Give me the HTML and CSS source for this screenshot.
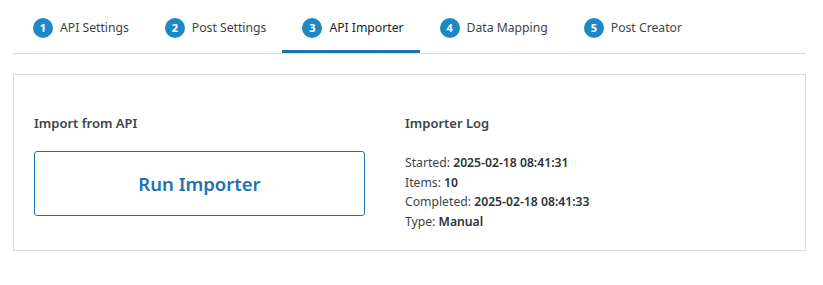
FILE: index.html
```html
<!DOCTYPE html>
<html>
<head>
<meta charset="utf-8">
<link rel="stylesheet" href="styles.css">
</head>
<body>
<div class="wrap">
  <nav class="tabs">
    <a class="tab"><span class="num">1</span><span class="label">API Settings</span></a>
    <a class="tab"><span class="num">2</span><span class="label">Post Settings</span></a>
    <a class="tab active"><span class="num">3</span><span class="label">API Importer</span></a>
    <a class="tab"><span class="num">4</span><span class="label">Data Mapping</span></a>
    <a class="tab"><span class="num">5</span><span class="label">Post Creator</span></a>
  </nav>
  <section class="card">
    <div class="col">
      <h3 class="heading">Import from API</h3>
      <button class="run">Run Importer</button>
    </div>
    <div class="col">
      <h3 class="heading">Importer Log</h3>
      <div class="log">
        <div>Started: <b>2025-02-18 08:41:31</b></div>
        <div>Items: <b>10</b></div>
        <div>Completed: <b>2025-02-18 08:41:33</b></div>
        <div>Type: <b>Manual</b></div>
      </div>
    </div>
  </section>
</div>
</body>
</html>
```
FILE: styles.css
```css
html, body {
  margin: 0;
  padding: 0;
  background: #ffffff;
}
body {
  font-family: "Noto Sans", "Open Sans", sans-serif;
  font-size: 12.2px;
  color: #3c434a;
}
.wrap {
  margin: 0 17px 0 13px;
}
.tabs {
  display: flex;
  border-bottom: 1px solid #dcdcde;
  height: 54px;
  box-sizing: border-box;
}
.tab {
  display: flex;
  align-items: center;
  gap: 7px;
  padding: 5px 16px 0 20px;
  height: 53px;
  box-sizing: border-box;
  border-bottom: 3px solid transparent;
  color: #3c434a;
}
.tab.active {
  border-bottom-color: #2271b1;
  color: #1d2327;
}
.num {
  width: 20px;
  height: 20px;
  border-radius: 50%;
  background: #1e88c7;
  color: #ffffff;
  font-size: 11px;
  font-weight: 700;
  display: flex;
  align-items: center;
  justify-content: center;
}
.label {
  font-size: 12.2px;
}
.card {
  margin-top: 20px;
  border: 1px solid #dcdcde;
  padding: 38px 20px 21px 20px;
  display: grid;
  grid-template-columns: 331px 1fr;
  column-gap: 40px;
  height: 177px;
  box-sizing: border-box;
}
.heading {
  margin: 0 0 18px 0;
  font-size: 13px;
  font-weight: 600;
  color: #3c434a;
  line-height: 20px;
}
.run {
  width: 331px;
  height: 65px;
  border: 1px solid #2271b1;
  border-radius: 3px;
  background: #ffffff;
  color: #2271b1;
  font-family: "Noto Sans", "Open Sans", sans-serif;
  font-size: 18.5px;
  font-weight: 600;
  padding: 0;
  margin-top: 0;
}
.log {
  padding-top: 2px;
  line-height: 19.5px;
}
.log b {
  font-weight: 600;
  color: #2c3338;
}
```
